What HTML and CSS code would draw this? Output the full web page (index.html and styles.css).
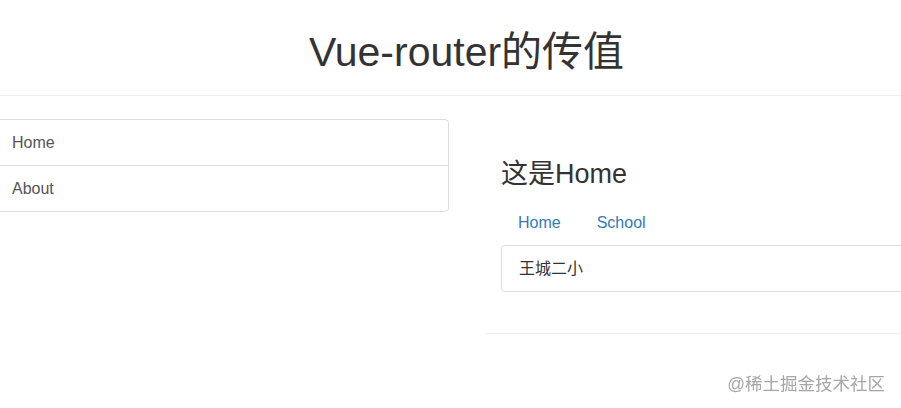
FILE: index.html
```html
<!DOCTYPE html>
<html lang="zh-CN">
<head>
<meta charset="utf-8">
<title>Vue-router的传值</title>
<link rel="stylesheet" href="styles.css">
</head>
<body>
<div class="page">
  <header class="page-header">
    <h1>Vue-router的传值</h1>
  </header>
  <div class="row">
    <div class="list-group">
      <a class="list-group-item" href="#">Home</a>
      <a class="list-group-item" href="#">About</a>
    </div>
    <div class="detail">
      <div class="detail-body">
        <h3 class="detail-title">这是Home</h3>
        <ul class="nav-pills">
          <li><a href="#">Home</a></li>
          <li><a href="#">School</a></li>
        </ul>
        <div class="panel">王城二小</div>
      </div>
      <hr class="divider">
    </div>
  </div>
</div>
<div class="watermark">@稀土掘金技术社区</div>
</body>
</html>
```

FILE: styles.css
```css
html, body {
  margin: 0;
  padding: 0;
  background: #fff;
}
body {
  font-family: "Liberation Sans", Arial, "Noto Sans CJK SC", sans-serif;
  color: #333;
  overflow: hidden;
  width: 901px;
  height: 408px;
}
.page {
  width: 945px;
  margin-left: -6px;
}
.page-header {
  padding: 29px 0 20px;
  border-bottom: 1px solid #eee;
  margin-bottom: 23px;
}
.page-header h1 {
  margin: 0;
  font-size: 41px;
  line-height: 46px;
  font-weight: normal;
  text-align: center;
  color: #333;
}
.row {
  display: grid;
  grid-template-columns: 455px 1fr;
  column-gap: 37px;
  align-items: start;
}
.list-group {
  display: flex;
  flex-direction: column;
  border: 1px solid #ddd;
  border-radius: 4px;
}
.list-group-item {
  display: block;
  padding: 11px 17px;
  font-size: 16px;
  line-height: 23px;
  color: #555;
  text-decoration: none;
}
.list-group-item + .list-group-item {
  border-top: 1px solid #ddd;
}
.detail {
  padding-top: 40px;
}
.detail-body {
  padding: 0 0 0 15px;
}
.detail-title {
  margin: 0 0 11px;
  font-size: 27px;
  line-height: 30px;
  font-weight: normal;
  color: #333;
}
.nav-pills {
  list-style: none;
  margin: 0;
  padding: 0;
  display: flex;
  gap: 2px;
}
.nav-pills a {
  display: block;
  padding: 11px 17px;
  font-size: 16px;
  line-height: 23px;
  color: #337ab7;
  text-decoration: none;
}
.panel {
  border: 1px solid #ddd;
  border-radius: 4px;
  padding: 11px 17px;
  font-size: 16px;
  line-height: 23px;
  color: #333;
}
.divider {
  margin: 41px 0 0;
  border: 0;
  border-top: 1px solid #eee;
  height: 0;
}
.watermark {
  position: fixed;
  right: 16px;
  bottom: 14px;
  font-size: 17.5px;
  line-height: 20px;
  color: #a6a6a6;
  font-family: "Liberation Sans", "Noto Sans CJK SC", sans-serif;
}
```
